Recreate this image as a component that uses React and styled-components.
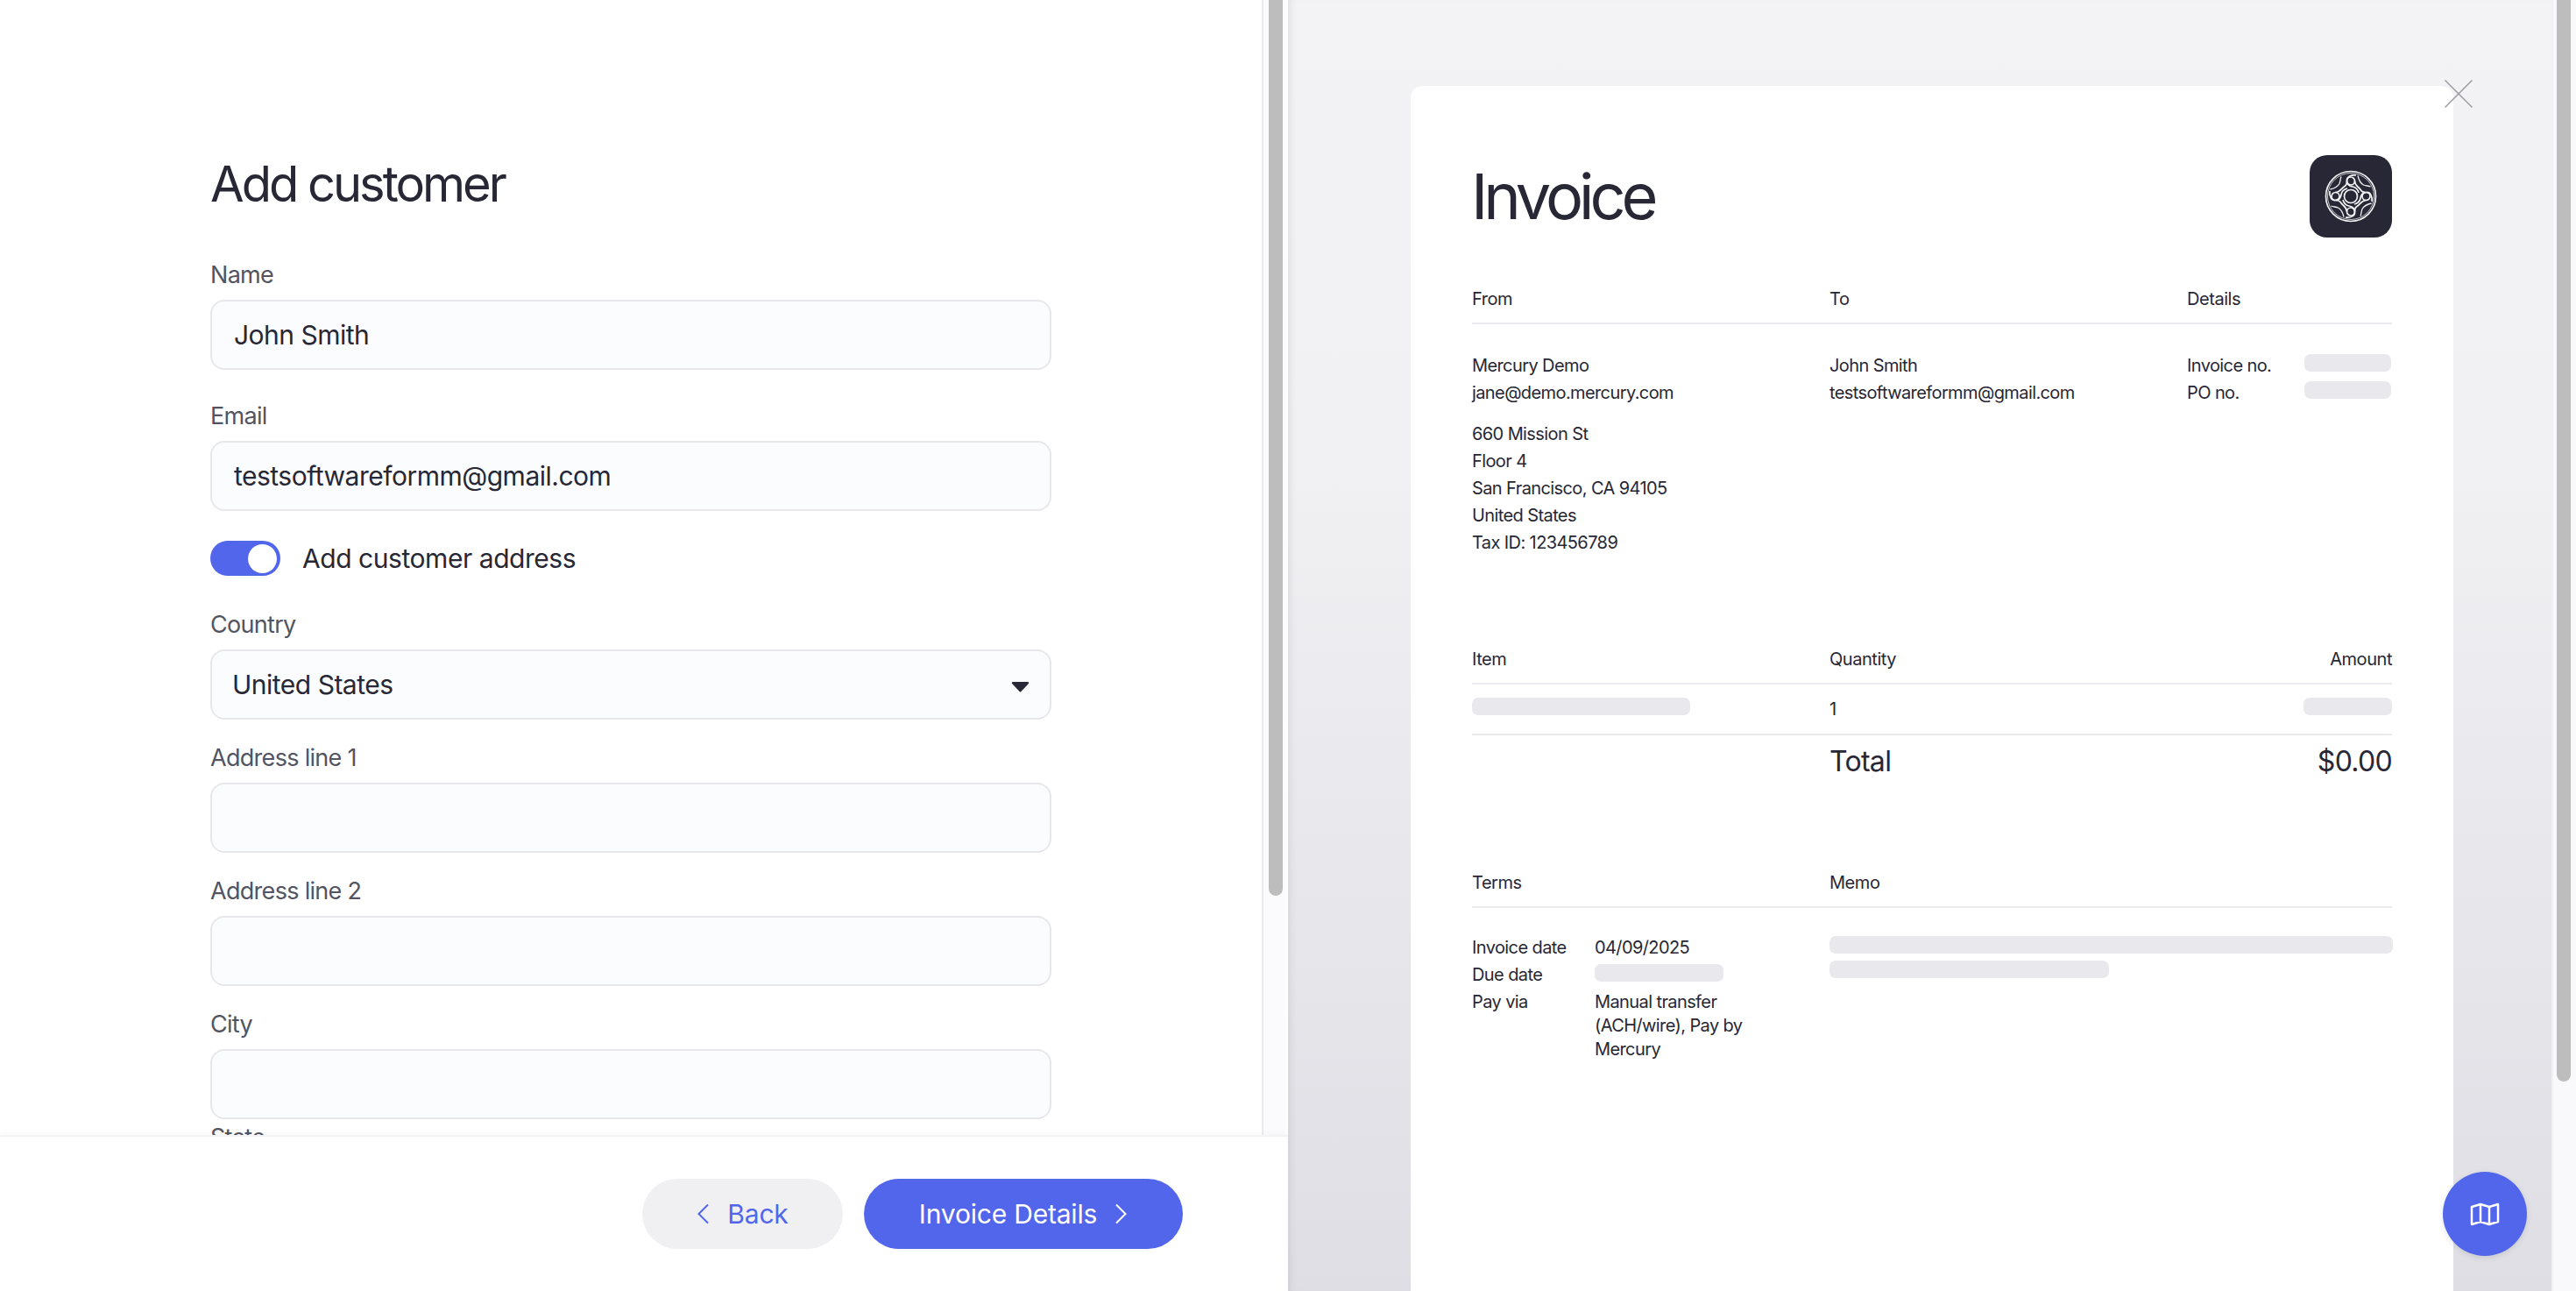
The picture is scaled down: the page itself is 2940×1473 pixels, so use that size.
import React from "react";
import styled, { createGlobalStyle } from "styled-components";

const GlobalStyle = createGlobalStyle`
  html, body {
    margin: 0;
    height: 100%;
    overflow: hidden;
    background: #fff;
    color: #272735;
    font-family: Inter, "Liberation Sans", sans-serif;
  }
  #root { height: 100%; }
  * { box-sizing: border-box; }
`;

const Page = styled.div`
  display: grid;
  grid-template-columns: 1470px 1fr;
  grid-template-rows: minmax(0, 1fr);
  height: 1473px;
`;

const FormPanel = styled.section`
  display: flex;
  flex-direction: column;
  min-width: 0;
  min-height: 0;
  background: #fff;
`;

const FormViewport = styled.div`
  position: relative;
  flex: 1;
  min-height: 0;
`;

const FormScroll = styled.div`
  height: 100%;
  padding-left: 240px;
  overflow: hidden;
`;

const FormBody = styled.div`
  width: 960px;
  padding: 174px 0 86px;
`;

// the browser hides native scrollbars here, so track and thumb are drawn over the panel
const ScrollTrack = styled.div`
  position: absolute;
  top: 0;
  bottom: 0;
  right: ${(p) => p.$right}px;
  width: 28px;
  padding-left: ${(p) => p.$inset}px;
  background: ${(p) => p.$bg};
  border-left: 2px solid ${(p) => p.$line};
`;

const ScrollThumb = styled.div`
  width: 16px;
  height: ${(p) => p.$h}px;
  border-radius: 0 0 8px 8px;
  background: #bdbdbd;
`;

const Title = styled.h1`
  margin: 0 0 48px;
  font-size: 56px;
  line-height: 72px;
  font-weight: 400;
  letter-spacing: -3px;
  color: #272735;
`;

const Field = styled.div`
  margin-bottom: ${(p) => p.$gap ?? 24}px;
`;

const Label = styled.label`
  display: block;
  height: 40px;
  margin-bottom: 8px;
  font-size: 27px;
  line-height: 40px;
  letter-spacing: -0.7px;
  color: #535461;
`;

const Input = styled.input`
  display: block;
  width: 100%;
  height: 80px;
  padding: 0 25px;
  background: #fbfcfd;
  border: 2px solid #e7e7ec;
  border-radius: 16px;
  font: inherit;
  font-size: 30px;
  letter-spacing: -0.5px;
  color: #272735;
  outline: none;
`;

const SelectWrap = styled.div`
  position: relative;
`;

const Select = styled.select`
  display: block;
  width: 100%;
  height: 80px;
  padding: 0 23px;
  appearance: none;
  background: #fbfcfd;
  border: 2px solid #e7e7ec;
  border-radius: 16px;
  font: inherit;
  font-size: 30px;
  letter-spacing: -0.5px;
  color: #272735;
  outline: none;
`;

const Caret = styled.svg`
  position: absolute;
  top: 36px;
  right: 25px;
  width: 21px;
  height: 13px;
  pointer-events: none;
`;

const ToggleRow = styled.div`
  display: flex;
  align-items: center;
  gap: 25px;
  height: 40px;
  margin: 34px 0 36px;
  font-size: 30px;
  letter-spacing: -0.45px;
`;

const Toggle = styled.span`
  display: flex;
  align-items: center;
  justify-content: flex-end;
  width: 80px;
  height: 40px;
  padding: 0 4px;
  border-radius: 20px;
  background: #5266eb;

  &::after {
    content: "";
    width: 33px;
    height: 33px;
    border-radius: 50%;
    background: #fff;
  }
`;

const Footer = styled.footer`
  position: relative;
  display: flex;
  flex: none;
  justify-content: flex-end;
  align-items: center;
  gap: 24px;
  height: 176px;
  padding-right: 120px;
  background: #fff;
  box-shadow: 0 -2px 0 #f4f4f7, 0 -4px 6px rgba(112, 112, 125, 0.04);
`;

const Button = styled.button`
  display: flex;
  align-items: center;
  justify-content: center;
  gap: 20px;
  height: 80px;
  width: ${(p) => (p.$primary ? 364 : 229)}px;
  border: 0;
  border-radius: 40px;
  background: ${(p) => (p.$primary ? "#5266eb" : "#f0f0f3")};
  color: ${(p) => (p.$primary ? "#fff" : "#5266eb")};
  font: inherit;
  font-size: 30px;
  letter-spacing: -0.2px;
`;

const Chevron = styled.svg`
  width: 15px;
  height: 24px;
  flex: none;
`;

const PreviewPanel = styled.section`
  position: relative;
  min-width: 0;
  min-height: 0;
`;

const PreviewScroll = styled.div`
  height: 100%;
  padding: 98px 0 0 140px;
  overflow: hidden;
  background: linear-gradient(180deg, #f3f3f6 0%, #f1f1f4 35%, #dedee4 100%);
  box-shadow: inset 8px 0 8px -6px rgba(112, 112, 125, 0.16);
`;

const Card = styled.article`
  width: 1190px;
  min-height: 1660px;
  padding: 79px 70px 0 70px;
  background: #fff;
  border-radius: 14px 14px 0 0;
`;

const CardHead = styled.header`
  display: flex;
  justify-content: space-between;
  align-items: center;
  height: 94px;
  margin-bottom: 55px;
`;

const InvoiceTitle = styled.h2`
  margin: 0 0 0 -1px;
  font-size: 72px;
  line-height: 92px;
  font-weight: 400;
  letter-spacing: -5px;
`;

const LogoBox = styled.div`
  display: flex;
  align-items: center;
  justify-content: center;
  width: 94px;
  height: 94px;
  border-radius: 20px;
  background: #272735;
`;

const Columns = styled.div`
  display: grid;
  grid-template-columns: ${(p) => p.$cols || "408px 408px 1fr"};
`;

const SectionHead = styled(Columns)`
  padding-bottom: 11px;
  border-bottom: 2px solid #ebebef;
  font-size: 20px;
  line-height: 31px;
  letter-spacing: -0.45px;
`;

const Right = styled.div`
  text-align: right;
`;

const Body = styled(Columns)`
  margin-top: 32px;
  font-size: 20px;
  line-height: 31px;
  letter-spacing: -0.6px;
`;

const Gap = styled.div`
  height: 16px;
`;

const Pairs = styled.div`
  display: grid;
  grid-template-columns: 134px 1fr;
  align-content: start;
`;

const Skeleton = styled.div`
  width: ${(p) => p.$w || "100%"};
  height: 20px;
  margin-top: ${(p) => p.$top ?? 2}px;
  margin-left: ${(p) => (p.$end ? "auto" : 0)};
  border-radius: 7px;
  background: #e9e9ed;
`;

const Section = styled.div`
  margin-top: ${(p) => p.$top}px;
`;

const ItemRow = styled(Columns)`
  height: 58px;
  border-bottom: 2px solid #ebebef;
  font-size: 20px;
  line-height: 56px;
`;

const TotalRow = styled(Columns)`
  height: 60px;
  font-size: 32px;
  line-height: 60px;
  letter-spacing: -0.7px;
`;

const TermsGrid = styled.div`
  display: grid;
  grid-template-columns: 140px 190px;
  margin-top: 30px;
  font-size: 20px;
  line-height: 31px;
  letter-spacing: -0.6px;
`;

const PayVia = styled.div`
  line-height: 27px;
  padding-top: 2px;
`;

const MemoLines = styled.div`
  margin-top: 32px;
  width: 643px;
`;

const CloseButton = styled.button`
  position: absolute;
  top: 91px;
  left: 1320px;
  display: flex;
  width: 32px;
  height: 32px;
  padding: 0;
  border: 0;
  background: transparent;
  color: #9a9aa2;
`;

const MapButton = styled.button`
  position: absolute;
  top: 1337px;
  left: 1318px;
  display: flex;
  align-items: center;
  justify-content: center;
  width: 96px;
  height: 96px;
  padding: 0;
  border: 0;
  border-radius: 50%;
  background: #5266eb;
  color: #fff;
  box-shadow: 0 2px 6px rgba(39, 39, 53, 0.12);
`;

function Logo() {
  const turns = [0, 90, 180, 270];
  return (
    <svg width="60" height="60" viewBox="-30 -30 60 60" fill="none" stroke="#f2f2f4" strokeWidth="1.7">
      <circle r="28.5" />
      <circle r="26.5" strokeWidth="0.8" />
      <circle r="7.5" />
      {turns.map((t) => (
        <g key={t} transform={`rotate(${t})`}>
          <circle cy="-17.5" r="4.5" />
          <path d="M4.500 -17.500C4.500 -12 9 -11 11.500 -7C13 -4.500 15 -4.500 17.500 -4.500" />
          <path d="M-4.500 -17.500C-4.500 -13 -1 -11.500 2 -11C5 -10.500 8 -8 9 -4" />
          <path d="M-4.500 -18C-5 -22 0 -25 6 -24" />
          <path d="M8 -23.500C9 -19 11 -15 14.500 -13C17 -12 20 -12 22.500 -11" strokeWidth="1.3" />
        </g>
      ))}
    </svg>
  );
}

export default function App() {
  return (
    <Page>
      <GlobalStyle />
      <FormPanel>
        <FormViewport>
          <FormScroll>
            <FormBody>
              <Title>Add customer</Title>
              <Field $gap={33}>
                <Label>Name</Label>
                <Input value="John Smith" readOnly />
              </Field>
              <Field $gap={0}>
                <Label>Email</Label>
                <Input value="testsoftwareformm@gmail.com" readOnly />
              </Field>
              <ToggleRow>
                <Toggle />
                Add customer address
              </ToggleRow>
              <Field>
                <Label>Country</Label>
                <SelectWrap>
                  <Select defaultValue="us">
                    <option value="us">United States</option>
                  </Select>
                  <Caret viewBox="0 0 21 13">
                    <path d="M2 1h17a1.2 1.2 0 0 1 .9 2l-8.500 9a1.200 1.200 0 0 1-1.800 0L1.100 3A1.200 1.200 0 0 1 2 1z" fill="#272735" />
                  </Caret>
                </SelectWrap>
              </Field>
              <Field>
                <Label>Address line 1</Label>
                <Input readOnly />
              </Field>
              <Field>
                <Label>Address line 2</Label>
                <Input readOnly />
              </Field>
              <Field $gap={1}>
                <Label>City</Label>
                <Input readOnly />
              </Field>
              <Field>
                <Label>State</Label>
                <Input readOnly />
              </Field>
            </FormBody>
          </FormScroll>
          <ScrollTrack $right={2} $inset={6} $bg="#fbfbfd" $line="#ebebef">
            <ScrollThumb $h={1022} />
          </ScrollTrack>
        </FormViewport>
        <Footer>
          <Button>
            <Chevron viewBox="0 0 15 24" fill="none" stroke="currentColor" strokeWidth="2">
              <path d="M13 1.500 2.500 12 13 22.500" />
            </Chevron>
            Back
          </Button>
          <Button $primary>
            Invoice Details
            <Chevron viewBox="0 0 15 24" fill="none" stroke="currentColor" strokeWidth="2">
              <path d="M2 1.500 12.500 12 2 22.500" />
            </Chevron>
          </Button>
        </Footer>
      </FormPanel>

      <PreviewPanel>
        <PreviewScroll>
          <Card>
            <CardHead>
              <InvoiceTitle>Invoice</InvoiceTitle>
              <LogoBox>
                <Logo />
              </LogoBox>
            </CardHead>

            <SectionHead>
              <div>From</div>
              <div>To</div>
              <div>Details</div>
            </SectionHead>
            <Body>
              <div>
                <div>Mercury Demo</div>
                <div>jane@demo.mercury.com</div>
                <Gap />
                <div>660 Mission St</div>
                <div>Floor 4</div>
                <div>San Francisco, CA 94105</div>
                <div>United States</div>
                <div>Tax ID: 123456789</div>
              </div>
              <div>
                <div>John Smith</div>
                <div>testsoftwareformm@gmail.com</div>
              </div>
              <Pairs>
                <div>Invoice no.</div>
                <Skeleton $w="99px" />
                <div>PO no.</div>
                <Skeleton $w="99px" />
              </Pairs>
            </Body>

            <Section $top={102}>
              <SectionHead>
                <div>Item</div>
                <div>Quantity</div>
                <Right>Amount</Right>
              </SectionHead>
              <ItemRow>
                <Skeleton $w="249px" $top={15} />
                <div>1</div>
                <Skeleton $w="101px" $top={15} $end />
              </ItemRow>
              <TotalRow>
                <div />
                <div>Total</div>
                <Right>$0.00</Right>
              </TotalRow>
            </Section>

            <Section $top={93}>
              <SectionHead>
                <div>Terms</div>
                <div>Memo</div>
                <div />
              </SectionHead>
              <Columns $cols="408px 1fr">
                <TermsGrid>
                  <div>Invoice date</div>
                  <div>04/09/2025</div>
                  <div>Due date</div>
                  <Skeleton $w="147px" $top={3} />
                  <div>Pay via</div>
                  <PayVia>Manual transfer (ACH/wire), Pay by Mercury</PayVia>
                </TermsGrid>
                <MemoLines>
                  <Skeleton $top={0} />
                  <Skeleton $w="319px" $top={8} />
                </MemoLines>
              </Columns>
            </Section>
          </Card>
        </PreviewScroll>
        <ScrollTrack $right={0} $inset={4} $bg="#f9f9fc" $line="#f1f1f4">
          <ScrollThumb $h={1234} />
        </ScrollTrack>
        <CloseButton aria-label="Close">
          <svg width="32" height="32" viewBox="0 0 32 32" stroke="currentColor" strokeWidth="1.500">
            <path d="M0.500 0.500 31.500 31.500M31.500 0.500 0.500 31.500" />
          </svg>
        </CloseButton>
        <MapButton aria-label="Map">
          <svg width="34" height="27" viewBox="0 0 34 27" fill="none" stroke="currentColor" strokeWidth="2.500" strokeLinejoin="round" strokeLinecap="round">
            <path d="M2 5 12 2 22 5 32 2V22L22 25 12 22 2 25ZM12 2V22M22 5V25" />
          </svg>
        </MapButton>
      </PreviewPanel>
    </Page>
  );
}
